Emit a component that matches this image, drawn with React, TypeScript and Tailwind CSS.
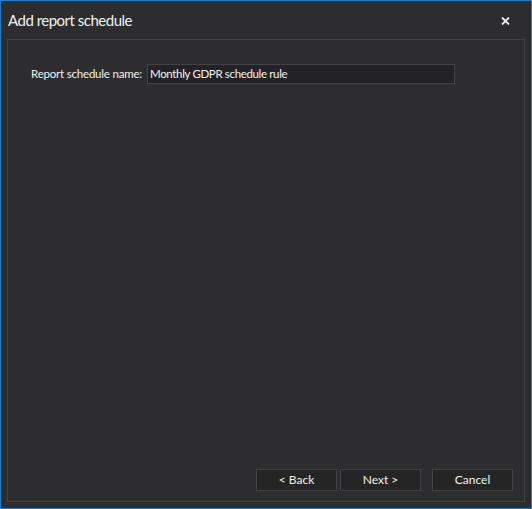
import React from "react";

export default function App() {
  const font = { fontFamily: 'Lato, "Noto Sans", sans-serif' };
  return (
    <div
      className="w-[532px] h-[509px] border border-[#1a7fd4] bg-[#2d2d30] flex flex-col text-[#f1f1f1]"
      style={font}
    >
      <div className="h-[38px] flex items-center justify-between pl-[7px] pr-[21px] shrink-0">
        <span className="text-[15px] leading-none tracking-[-0.5px]">Add report schedule</span>
        <svg width="9" height="8" viewBox="0 0 9 8" className="mt-[1px]">
          <path d="M1 0.5 L8 7.5 M8 0.5 L1 7.5" stroke="#f1f1f1" strokeWidth="1.8" />
        </svg>
      </div>
      <div className="flex-1 px-[6px] pb-[6px] flex">
        <div className="flex-1 border border-[#434346] flex flex-col">
          <div className="flex items-center mt-[24px] ml-[23px] gap-[5px]">
            <span className="text-[11.5px] leading-none tracking-[-0.2px]">Report schedule name:</span>
            <div className="w-[308px] h-[20px] bg-[#232325] border border-[#434346] flex items-center px-[2px] text-[11.5px] leading-none tracking-[-0.35px]">
              Monthly GDPR schedule rule
            </div>
          </div>
          <div className="flex-1" />
          <div className="flex justify-end mr-[11px] mb-[10px]">
            <button className="w-[81px] h-[22px] bg-[#252526] border border-[#434346] text-[12px] leading-none">
              &lt; Back
            </button>
            <button className="w-[81px] h-[22px] ml-[3px] bg-[#252526] border border-[#434346] text-[12px] leading-none">
              Next &gt;
            </button>
            <button className="w-[81px] h-[22px] ml-[11px] bg-[#252526] border border-[#434346] text-[12px] leading-none">
              Cancel
            </button>
          </div>
        </div>
      </div>
    </div>
  );
}
